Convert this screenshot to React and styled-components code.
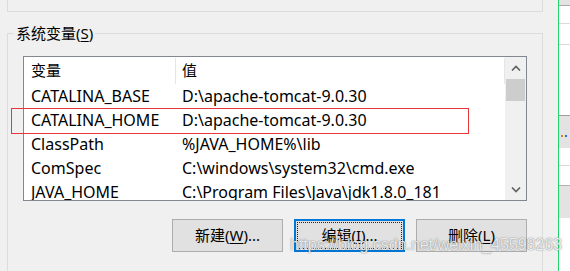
import React from "react";
import styled, { createGlobalStyle } from "styled-components";

const GlobalStyle = createGlobalStyle`
  html, body { margin: 0; padding: 0; background: #f0f0f0; overflow: hidden; }
  * { box-sizing: border-box; }
`;

const FONT = `"Noto Sans", "Noto Sans CJK SC", sans-serif`;

const Screen = styled.div`
  position: relative;
  width: 570px;
  height: 271px;
  display: flex;
  overflow: hidden;
  background: #f0f0f0;
  font-family: ${FONT};
  color: #000;
`;

const Dialog = styled.div`
  width: 558px;
  padding-left: 7px;
  display: flex;
  flex-direction: column;
`;

const UpperGroup = styled.div`
  width: 536px;
  height: 12px;
  border: 1px solid #dcdcdc;
  border-top: none;
  flex: none;
`;

const GroupBox = styled.fieldset`
  width: 536px;
  margin: 11px 0 0 0;
  padding: 0;
  border: 1px solid #dcdcdc;
  border-bottom: none;
  min-width: 0;
  flex: 1;
`;

const Legend = styled.legend`
  margin-left: 6px;
  padding: 0 2px;
  font-size: 15px;
  line-height: 21px;
  height: 21px;
`;

const Key = styled.span`
  text-decoration: underline;
  text-underline-offset: 2px;
  text-decoration-thickness: 1px;
`;

const ListBox = styled.div`
  margin: 12px 0 0 15px;
  width: 504px;
  height: 145px;
  border: 1px solid #828790;
  background: #fff;
  display: flex;
  overflow: hidden;
`;

const Table = styled.div`
  flex: 1;
  display: flex;
  flex-direction: column;
  overflow: hidden;
`;

const Header = styled.div`
  display: grid;
  grid-template-columns: 152px 1fr;
  height: 27px;
  flex: none;
`;

const HeaderCell = styled.div`
  display: flex;
  align-items: center;
  padding-left: ${(p) => (p.$first ? "7px" : "6px")};
  margin: 1px 0 0;
  border-right: 1px solid #e5e5e5;
  font-size: 15px;
  line-height: 20px;
  padding-bottom: 2px;
`;

const Row = styled.div`
  display: grid;
  grid-template-columns: 152px 1fr;
  height: 24px;
  flex: none;
`;

const Cell = styled.div`
  display: flex;
  align-items: center;
  padding-left: ${(p) => (p.$first ? "7px" : "6px")};
  font-size: 16px;
  line-height: 22px;
  white-space: nowrap;
  overflow: hidden;
`;

const ScrollBar = styled.div`
  width: 21px;
  flex: none;
  background: #f0f0f0;
  display: flex;
  flex-direction: column;
`;

const ArrowButton = styled.div`
  height: 21px;
  flex: none;
  display: flex;
  align-items: center;
  justify-content: center;
`;

const Thumb = styled.div`
  height: 22px;
  margin: 1px 1px 0 1px;
  background: #cdcdcd;
  flex: none;
`;

const Track = styled.div`
  flex: 1;
`;

const ButtonRow = styled.div`
  margin: 18px 0 0 15px;
  width: 504px;
  display: flex;
  justify-content: flex-end;
  gap: 11px;
`;

const Button = styled.div`
  position: relative;
  width: 111px;
  height: 33px;
  background: #e1e1e1;
  border: ${(p) => (p.$focused ? "2px solid #0078d7" : "1px solid #adadad")};
  display: flex;
  align-items: center;
  justify-content: center;
  font-size: 15px;
  line-height: 20px;
  padding-bottom: 1px;
  ${(p) =>
    p.$focused
      ? `outline: 1px dotted #222; outline-offset: -4px;`
      : ""}
`;

const Divider = styled.div`
  width: 1px;
  background: #22d36c;
  flex: none;
`;

const SheetStrip = styled.div`
  flex: 1;
  background: #fff;
  display: flex;
  flex-direction: column;
`;

const SheetCell = styled.div`
  position: relative;
  height: ${(p) => p.$h}px;
  flex: none;
  background: ${(p) => (p.$gray ? "#e3e3e3" : "#fff")};
  border-top: ${(p) => (p.$top ? `1px solid ${p.$top}` : "none")};
  border-bottom: ${(p) => (p.$bottom ? `1px solid ${p.$bottom}` : "none")};
`;

const Dots = styled.div`
  display: flex;
  gap: 2px;
  padding: 19px 0 0 2px;
`;

const Dot = styled.span`
  width: 2px;
  height: 2px;
  background: ${(p) => p.$c};
`;

const Highlight = styled.div`
  position: absolute;
  left: 11px;
  top: 108px;
  width: 458px;
  height: 26px;
  border: 1px solid #e8353c;
  pointer-events: none;
`;

const Watermark = styled.div`
  position: absolute;
  left: 290px;
  top: 235px;
  font-family: "Liberation Sans", Arial, sans-serif;
  font-size: 16px;
  line-height: 20px;
  color: rgba(255, 255, 255, 0.85);
  text-shadow: 0 0 1px rgba(60, 60, 60, 0.6), 0 0 2px rgba(90, 90, 90, 0.35);
  white-space: nowrap;
  pointer-events: none;
`;

const Chevron = ({ up }) => (
  <svg width="10" height="6" viewBox="0 0 10 6">
    <path
      d={up ? "M1 5.5 L5 1.5 L9 5.5" : "M1 0.5 L5 4.5 L9 0.5"}
      fill="none"
      stroke="#606060"
      strokeWidth="1.6"
    />
  </svg>
);

const rows = [
  ["CATALINA_BASE", "D:\\apache-tomcat-9.0.30"],
  ["CATALINA_HOME", "D:\\apache-tomcat-9.0.30"],
  ["ClassPath", "%JAVA_HOME%\\lib"],
  ["ComSpec", "C:\\windows\\system32\\cmd.exe"],
  ["JAVA_HOME", "C:\\Program Files\\Java\\jdk1.8.0_181"],
];

export default function App() {
  return (
    <>
      <GlobalStyle />
      <Screen>
        <Dialog>
          <UpperGroup />
          <GroupBox>
            <Legend>
              系统变量(<Key>S</Key>)
            </Legend>
            <ListBox>
              <Table>
                <Header>
                  <HeaderCell $first>变量</HeaderCell>
                  <HeaderCell>值</HeaderCell>
                </Header>
                {rows.map(([name, value]) => (
                  <Row key={name}>
                    <Cell $first>{name}</Cell>
                    <Cell>{value}</Cell>
                  </Row>
                ))}
              </Table>
              <ScrollBar>
                <ArrowButton>
                  <Chevron up />
                </ArrowButton>
                <Thumb />
                <Track />
                <ArrowButton>
                  <Chevron />
                </ArrowButton>
              </ScrollBar>
            </ListBox>
            <ButtonRow>
              <Button>
                新建(<Key>W</Key>)...
              </Button>
              <Button $focused>
                编辑(<Key>I</Key>)...
              </Button>
              <Button>
                删除(<Key>L</Key>)
              </Button>
            </ButtonRow>
          </GroupBox>
        </Dialog>
        <Divider />
        <SheetStrip>
          <SheetCell $h={6} $gray $bottom="#a8a8a8" />
          <SheetCell $h={18} $bottom="#dadada" />
          <SheetCell $h={21} $bottom="#dadada" />
          <SheetCell $h={70} />
          <SheetCell $h={33} $gray $top="#a0a0a0">
            <Dots>
              <Dot $c="#d9822b" />
              <Dot $c="#2b6cd9" />
            </Dots>
          </SheetCell>
          <SheetCell $h={18} $bottom="#dadada" />
          <SheetCell $h={19} />
          <SheetCell $h={33} $gray $top="#b0b0b0" />
          <SheetCell $h={60} />
        </SheetStrip>
        <Highlight />
        <Watermark>https://blog.csdn.net/weixin_45598263</Watermark>
      </Screen>
    </>
  );
}
